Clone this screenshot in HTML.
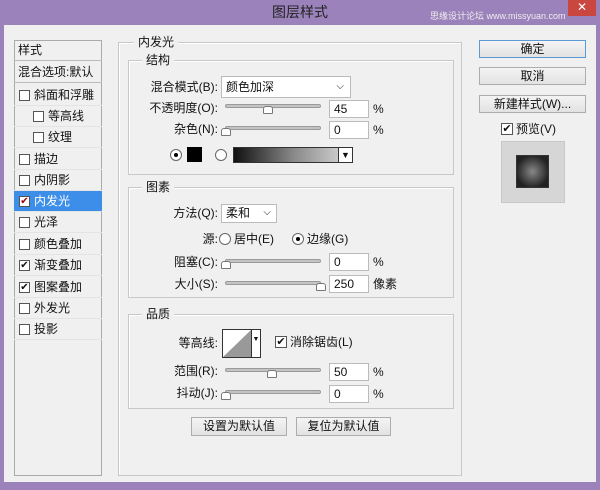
<!DOCTYPE html><html><head><meta charset="utf-8"><style>
*{box-sizing:border-box;margin:0;padding:0}
body{width:600px;height:490px;background:#9c82bb;font-family:"Liberation Sans","Noto Sans CJK SC",sans-serif;font-size:12px;line-height:14px;color:#111;position:relative;overflow:hidden}
.a{position:absolute}
.dlg{left:4px;top:25px;width:592px;height:457px;background:#f0f0f0}
.grp{position:absolute;border:1px solid #c8c8c8;box-shadow:inset 1px 1px 0 #fff}
.lbl{position:absolute;background:#f0f0f0;padding:0 4px;line-height:14px}
.inp{position:absolute;background:#fff;border:1px solid #bbb;height:18px;line-height:16px;padding-left:4px}
.btn{position:absolute;border:1px solid #adadad;background:linear-gradient(#f4f4f4,#e2e2e2);text-align:center;line-height:16px;height:18px}
.track{position:absolute;height:4px;background:#c4c4c4;border:1px solid #9a9a9a;border-radius:2px}
.thumb{position:absolute;width:10px;height:8px;background:#fff;border:1px solid #777;border-radius:3px 3px 1px 1px}
.cb{position:absolute;width:11px;height:11px;border:1px solid #555;background:#fff;font-size:10px;line-height:9px;text-align:center}
.rd{position:absolute;width:12px;height:12px;border:1px solid #666;border-radius:50%;background:#fff}
.li{position:absolute;left:14px;width:88px;height:21px;line-height:21px;padding-left:20px;border-bottom:1px solid #e4e4e4}
.r{text-align:right}
</style></head><body>
<div class="a" style="left:0;top:0;width:600px;height:25px;text-align:center;line-height:24px;font-size:14px;color:#222">图层样式</div>
<div class="a" style="left:430px;top:9px;font-size:9px;color:#eee">思缘设计论坛 www.missyuan.com</div>
<div class="a" style="left:568px;top:0;width:28px;height:16px;background:#c9473f;color:#fff;text-align:center;line-height:15px;font-size:12px">✕</div>
<div class="a dlg"></div>
<div class="a" style="left:14px;top:40px;width:88px;height:436px;border:1px solid #aaa;background:#f0f0f0"></div>
<div class="li" style="top:40px;padding-left:4px;border-bottom:1px solid #bbb">样式</div>
<div class="li" style="top:62px;padding-left:4px;border-bottom:1px solid #bbb;white-space:nowrap;overflow:hidden">混合选项:默认</div>
<div class="li" style="top:85px">斜面和浮雕</div><div class="cb" style="left:19px;top:90px"></div>
<div class="li" style="top:106px;padding-left:34px">等高线</div><div class="cb" style="left:33px;top:111px"></div>
<div class="li" style="top:127px;padding-left:34px">纹理</div><div class="cb" style="left:33px;top:132px"></div>
<div class="li" style="top:149px">描边</div><div class="cb" style="left:19px;top:154px"></div>
<div class="li" style="top:170px">内阴影</div><div class="cb" style="left:19px;top:175px"></div>
<div class="li" style="top:191px;background:#3c8ee8;color:#fff">内发光</div><div class="cb" style="left:19px;top:196px;color:#900">✔</div>
<div class="li" style="top:212px">光泽</div><div class="cb" style="left:19px;top:217px"></div>
<div class="li" style="top:234px">颜色叠加</div><div class="cb" style="left:19px;top:239px"></div>
<div class="li" style="top:255px">渐变叠加</div><div class="cb" style="left:19px;top:260px">✔</div>
<div class="li" style="top:277px">图案叠加</div><div class="cb" style="left:19px;top:282px">✔</div>
<div class="li" style="top:298px">外发光</div><div class="cb" style="left:19px;top:303px"></div>
<div class="li" style="top:319px">投影</div><div class="cb" style="left:19px;top:324px"></div>
<div class="grp" style="left:118px;top:42px;width:344px;height:434px"></div>
<div class="lbl" style="left:134px;top:35px">内发光</div>
<div class="grp" style="left:128px;top:60px;width:326px;height:115px"></div>
<div class="lbl" style="left:142px;top:53px">结构</div>
<div class="a r" style="left:130px;top:80px;width:88px">混合模式(B):</div>
<div class="inp" style="left:221px;top:76px;width:130px;height:22px;line-height:20px">颜色加深<span style="position:absolute;right:6px;font-size:10px">⌵</span></div>
<div class="a r" style="left:130px;top:101px;width:88px">不透明度(O):</div>
<div class="track" style="left:225px;top:104px;width:96px"></div><div class="thumb" style="left:263px;top:106px"></div>
<div class="inp" style="left:329px;top:100px;width:40px">45</div><div class="a" style="left:373px;top:102px">%</div>
<div class="a r" style="left:130px;top:122px;width:88px">杂色(N):</div>
<div class="track" style="left:225px;top:126px;width:96px"></div><div class="thumb" style="left:221px;top:128px"></div>
<div class="inp" style="left:329px;top:121px;width:40px">0</div><div class="a" style="left:373px;top:123px">%</div>
<div class="rd" style="left:170px;top:149px"><div class="a" style="left:3px;top:3px;width:4px;height:4px;border-radius:50%;background:#000"></div></div>
<div class="a" style="left:187px;top:147px;width:15px;height:15px;background:#000"></div>
<div class="rd" style="left:215px;top:149px"></div>
<div class="a" style="left:233px;top:147px;width:120px;height:16px;border:1px solid #333;background:linear-gradient(90deg,#111,#888 50%,#ddd)"></div>
<div class="a" style="left:338px;top:148px;width:14px;height:14px;background:#fff;border-left:1px solid #333;text-align:center;font-size:9px;line-height:14px">▼</div>
<div class="grp" style="left:128px;top:187px;width:326px;height:111px"></div>
<div class="lbl" style="left:142px;top:180px">图素</div>
<div class="a r" style="left:130px;top:206px;width:88px">方法(Q):</div>
<div class="inp" style="left:221px;top:204px;width:56px;height:19px">柔和<span style="position:absolute;right:5px;font-size:10px">⌵</span></div>
<div class="a r" style="left:130px;top:232px;width:88px">源:</div>
<div class="rd" style="left:219px;top:233px"></div><div class="a" style="left:234px;top:232px">居中(E)</div>
<div class="rd" style="left:292px;top:233px"><div class="a" style="left:3px;top:3px;width:4px;height:4px;border-radius:50%;background:#000"></div></div><div class="a" style="left:307px;top:232px">边缘(G)</div>
<div class="a r" style="left:130px;top:255px;width:88px">阻塞(C):</div>
<div class="track" style="left:225px;top:259px;width:96px"></div><div class="thumb" style="left:221px;top:261px"></div>
<div class="inp" style="left:329px;top:253px;width:40px">0</div><div class="a" style="left:373px;top:255px">%</div>
<div class="a r" style="left:130px;top:277px;width:88px">大小(S):</div>
<div class="track" style="left:225px;top:281px;width:96px"></div><div class="thumb" style="left:316px;top:283px"></div>
<div class="inp" style="left:329px;top:275px;width:40px">250</div><div class="a" style="left:373px;top:277px">像素</div>
<div class="grp" style="left:128px;top:314px;width:326px;height:95px"></div>
<div class="lbl" style="left:142px;top:307px">品质</div>
<div class="a r" style="left:130px;top:336px;width:88px">等高线:</div>
<div class="a" style="left:222px;top:329px;width:39px;height:29px;border:1px solid #333;background:#fff">
<svg width="28" height="27" style="position:absolute;left:0;top:0"><polygon points="0,27 28,0 28,27" fill="#999"/></svg>
<div class="a" style="left:28px;top:0;width:9px;height:27px;border-left:1px solid #333;font-size:7px;text-align:center;line-height:20px">▼</div></div>
<div class="cb" style="left:275px;top:336px;width:12px;height:12px;font-size:11px;line-height:10px">✔</div>
<div class="a" style="left:290px;top:335px">消除锯齿(L)</div>
<div class="a r" style="left:130px;top:364px;width:88px">范围(R):</div>
<div class="track" style="left:225px;top:368px;width:96px"></div><div class="thumb" style="left:267px;top:370px"></div>
<div class="inp" style="left:329px;top:363px;width:40px">50</div><div class="a" style="left:373px;top:365px">%</div>
<div class="a r" style="left:130px;top:386px;width:88px">抖动(J):</div>
<div class="track" style="left:225px;top:390px;width:96px"></div><div class="thumb" style="left:221px;top:392px"></div>
<div class="inp" style="left:329px;top:385px;width:40px">0</div><div class="a" style="left:373px;top:387px">%</div>
<div class="btn" style="left:191px;top:417px;width:96px;height:19px">设置为默认值</div>
<div class="btn" style="left:296px;top:417px;width:95px;height:19px">复位为默认值</div>
<div class="btn" style="left:479px;top:40px;width:107px;border-color:#5b9bd5">确定</div>
<div class="btn" style="left:479px;top:67px;width:107px">取消</div>
<div class="btn" style="left:479px;top:95px;width:107px">新建样式(W)...</div>
<div class="cb" style="left:501px;top:123px;width:12px;height:12px;font-size:11px;line-height:10px">✔</div>
<div class="a" style="left:516px;top:122px">预览(V)</div>
<div class="a" style="left:501px;top:141px;width:64px;height:62px;background:#d6d6d6;border:1px solid #c8c8c8"></div>
<div class="a" style="left:517px;top:156px;width:31px;height:31px;background:radial-gradient(#888,#222 75%);box-shadow:0 0 0 1px #333"></div>
</body></html>
